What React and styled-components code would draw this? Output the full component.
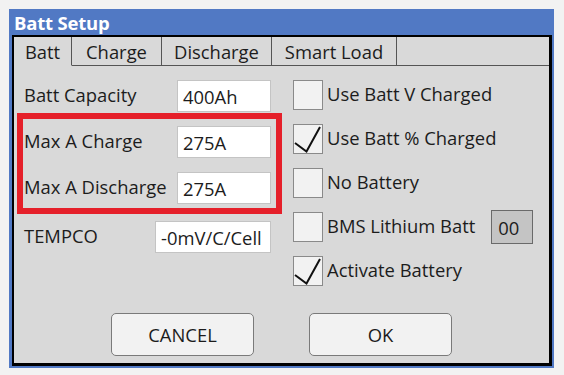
import styled, { createGlobalStyle } from "styled-components";

const GlobalStyle = createGlobalStyle`
  html, body {
    margin: 0;
    padding: 0;
    background: #f2f2f2;
  }
  body {
    font-family: "Open Sans", "Noto Sans", sans-serif;
    font-size: 18.4px;
    color: #1c1c1c;
  }
`;

const Window = styled.div`
  margin: 9px 0 0 9px;
  width: 545px;
  height: 359px;
  box-sizing: border-box;
  background: #5179c4;
  padding: 0 2px 2px 3px;
  display: flex;
  flex-direction: column;
`;

const TitleBar = styled.div`
  height: 26px;
  display: flex;
  align-items: center;
  padding-left: 2px;
  color: #ffffff;
  font-weight: 700;
  font-size: 18.5px;
  letter-spacing: -0.2px;
`;

const Body = styled.div`
  flex: 1;
  display: flex;
  flex-direction: column;
  background: #d9d9d9;
  border: solid #000;
  border-width: 2px 3px 3px 2px;
`;

const TabBar = styled.div`
  display: flex;
  height: 29px;
`;

const Tab = styled.div`
  width: ${(p) => p.$w}px;
  display: flex;
  align-items: center;
  justify-content: center;
  border-right: 1px solid #555;
  border-bottom: ${(p) => (p.$active ? "1px solid transparent" : "1px solid #555")};
`;

const TabFill = styled.div`
  flex: 1;
  border-bottom: 1px solid #555;
`;

const Panel = styled.div`
  display: flex;
  padding-top: 14px;
`;

const LeftCol = styled.div`
  width: 265px;
  margin-left: 3px;
  display: flex;
  flex-direction: column;
`;

const Field = styled.div`
  display: flex;
  align-items: center;
  justify-content: space-between;
  height: 32px;
  padding: ${(p) => (p.$boxed ? "0 5px 0 1px" : "0 11px 0 7px")};
`;

const Label = styled.span`
  margin-top: -3px;
`;

const Highlight = styled.div`
  border: 6px solid #e5202a;
  margin: 1px 0 7px;
  padding: 7px 0 4px;
  display: flex;
  flex-direction: column;
  gap: 14px;
`;

const Input = styled.div`
  width: ${(p) => p.$w}px;
  height: 32px;
  box-sizing: border-box;
  background: #fff;
  border: 1px solid #c4c4c4;
  display: flex;
  align-items: center;
  padding-left: 5px;
`;

const RightCol = styled.div`
  margin-left: 11px;
  display: flex;
  flex-direction: column;
  gap: 14px;
`;

const CheckRow = styled.div`
  display: flex;
  align-items: center;
  height: 30px;
`;

const Box = styled.div`
  position: relative;
  width: 30px;
  height: 30px;
  box-sizing: border-box;
  background: #f2f2f2;
  border: 1px solid #8a8a8a;
  margin-right: 4px;
  flex-shrink: 0;
`;

const Tick = styled.svg`
  position: absolute;
  left: -1px;
  top: -1px;
  overflow: visible;
`;

const Code = styled.div`
  width: 42px;
  height: 34px;
  box-sizing: border-box;
  margin-left: 16px;
  background: #c4c4c4;
  border: 1px solid #6a6a6a;
  display: flex;
  align-items: center;
  padding-left: 6px;
`;

const ButtonRow = styled.div`
  margin-top: auto;
  padding-bottom: 7px;
  display: flex;
  justify-content: center;
  gap: 55px;
`;

const Button = styled.div`
  width: 143px;
  height: 43px;
  box-sizing: border-box;
  background: #f2f2f2;
  border: 1px solid #7a7a7a;
  border-radius: 5px;
  display: flex;
  align-items: center;
  justify-content: center;
`;

function Check({ label, checked, children }) {
  return (
    <CheckRow>
      <Box>
        {checked && (
          <Tick width="30" height="30" viewBox="0 0 30 30">
            <polyline
              points="2,19 13.5,27.5 27,3"
              fill="none"
              stroke="#111"
              strokeWidth="2"
            />
          </Tick>
        )}
      </Box>
      <Label>{label}</Label>
      {children}
    </CheckRow>
  );
}

const tabs = [
  { label: "Batt", w: 57, active: true },
  { label: "Charge", w: 89 },
  { label: "Discharge", w: 109 },
  { label: "Smart Load", w: 124 },
];

export default function App() {
  return (
    <>
      <GlobalStyle />
      <Window>
        <TitleBar>Batt Setup</TitleBar>
        <Body>
          <TabBar>
            {tabs.map((t) => (
              <Tab key={t.label} $w={t.w} $active={t.active}>
                {t.label}
              </Tab>
            ))}
            <TabFill />
          </TabBar>
          <Panel>
            <LeftCol>
              <Field>
                <Label>Batt Capacity</Label>
                <Input $w={94}>400Ah</Input>
              </Field>
              <Highlight>
                <Field $boxed>
                  <Label>Max A Charge</Label>
                  <Input $w={94}>275A</Input>
                </Field>
                <Field $boxed>
                  <Label>Max A Discharge</Label>
                  <Input $w={94}>275A</Input>
                </Field>
              </Highlight>
              <Field>
                <Label>TEMPCO</Label>
                <Input $w={116}>-0mV/C/Cell</Input>
              </Field>
            </LeftCol>
            <RightCol>
              <Check label="Use Batt V Charged" />
              <Check label="Use Batt % Charged" checked />
              <Check label="No Battery" />
              <Check label="BMS Lithium Batt">
                <Code>00</Code>
              </Check>
              <Check label="Activate Battery" checked />
            </RightCol>
          </Panel>
          <ButtonRow>
            <Button>CANCEL</Button>
            <Button>OK</Button>
          </ButtonRow>
        </Body>
      </Window>
    </>
  );
}
